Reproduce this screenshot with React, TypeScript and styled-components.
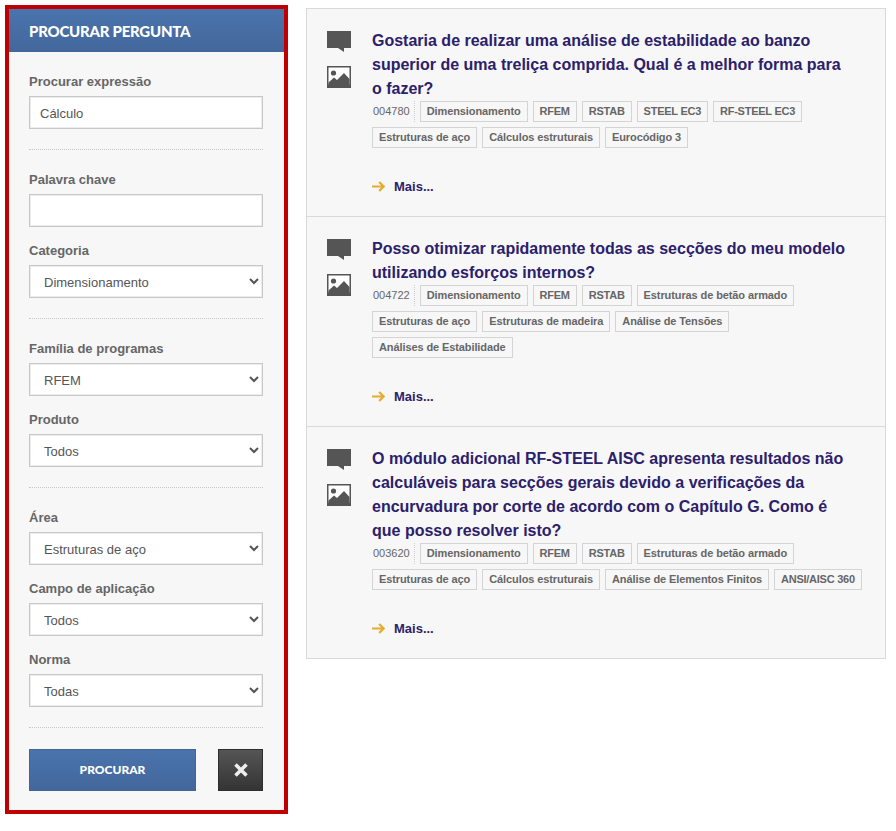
import React from "react";
import styled, { createGlobalStyle } from "styled-components";

const Global = createGlobalStyle`
  html, body { margin: 0; padding: 0; background: #fff; }
  body { font-family: "Liberation Sans", Arial, sans-serif; }
  * { box-sizing: border-box; }
`;

const Page = styled.div`
  width: 896px;
  height: 831px;
  display: flex;
  align-items: flex-start;
  padding: 5px 0 0 5px;
  gap: 18px;
`;

const Sidebar = styled.form`
  width: 283px;
  height: 809px;
  flex: none;
  border: 4px solid #c00000;
  background: #f7f7f7;
`;

const SideHeader = styled.h2`
  margin: 0;
  height: 43px;
  padding: 0 20px;
  display: flex;
  align-items: center;
  background: linear-gradient(#4a74ad, #43679b);
  color: #fff;
  font-family: Lato, "Liberation Sans", sans-serif;
  font-size: 15px;
  font-weight: 900;
  letter-spacing: -0.25px;
`;

const SideBody = styled.div`
  padding: 21px 21px 0 20px;
  display: flex;
  flex-direction: column;
`;

const Group = styled.div`
  display: flex;
  flex-direction: column;
  gap: 15px;
`;

const Field = styled.div`
  display: flex;
  flex-direction: column;
  gap: 6px;
`;

const Label = styled.label`
  height: 17px;
  font-size: 13px;
  line-height: 17px;
  font-weight: 700;
  color: #666;
`;

const TextInput = styled.input`
  width: 234px;
  height: 33px;
  border: 1px solid #c8c8c8;
  box-shadow: inset 0 0 0 1px #ececec;
  background: #fff;
  padding: 1px 10px 0;
  font-family: "Liberation Sans", Arial, sans-serif;
  font-size: 13px;
  color: #555;
  outline: none;
`;

const Select = styled.select`
  width: 234px;
  height: 33px;
  border: 1px solid #c8c8c8;
  box-shadow: inset 0 0 0 1px #ececec;
  background-color: #fff;
  padding: 1px 10px 0;
  font-family: "Liberation Sans", Arial, sans-serif;
  font-size: 13px;
  color: #555;
  outline: none;
`;

const Dotted = styled.hr`
  width: 234px;
  margin: 20px 0 21px;
  height: 1px;
  border: 0;
  border-top: 1px dotted #c8c8c8;
`;

const Buttons = styled.div`
  display: flex;
  justify-content: space-between;
`;

const SearchButton = styled.button`
  width: 167px;
  height: 42px;
  padding: 0 0 2px;
  border: 1px solid #41659a;
  background: linear-gradient(#4a74ad, #43679b);
  color: #fff;
  font-family: Lato, "Liberation Sans", sans-serif;
  font-size: 12px;
  font-weight: 900;
`;

const ClearButton = styled.button`
  width: 45px;
  height: 42px;
  padding: 0;
  border: 1px solid #2e2e2e;
  background: linear-gradient(#555, #343434);
  display: flex;
  align-items: center;
  justify-content: center;
`;

const Results = styled.div`
  width: 580px;
  margin-top: 3px;
  border: 1px solid #d9d9d9;
  background: #f7f7f7;
  flex: none;
`;

const Row = styled.article<{ $h: number }>`
  height: ${(p) => p.$h}px;
  padding: 20px 20px 0 20px;
  display: flex;
  gap: 21px;
  border-bottom: 1px solid #d9d9d9;
  &:last-child { border-bottom: 0; }
`;

const IconColumn = styled.div`
  width: 24px;
  flex: none;
  display: flex;
  flex-direction: column;
  gap: 14px;
  padding-top: 2px;
`;

const Content = styled.div`
  flex: 1;
  min-width: 0;
`;

const Title = styled.h3`
  margin: 0;
  max-width: 480px;
  font-size: 16px;
  line-height: 24px;
  font-weight: 700;
  color: #2c206b;
`;

const TagLine = styled.div`
  display: flex;
  flex-wrap: wrap;
  align-items: center;
  gap: 5px;
`;

const Ref = styled.span`
  height: 21px;
  line-height: 21px;
  padding: 0 4px 0 1px;
  border-right: 1px dotted #ccc;
  font-size: 11px;
  font-weight: 400;
  color: #666;
`;

const Tag = styled.span<{ $caps: boolean }>`
  height: 21px;
  line-height: 19px;
  padding: 0 6px;
  border: 1px solid #d4d4d4;
  font-size: 11px;
  font-weight: 700;
  letter-spacing: ${(p) => (p.$caps ? "-0.25px" : "-0.1px")};
  color: #666;
  white-space: nowrap;
`;

const More = styled.a`
  margin-top: 30px;
  display: flex;
  align-items: center;
  gap: 9px;
  font-size: 13px;
  line-height: 17px;
  font-weight: 700;
  color: #2c206b;
`;

const Arrow = () => (
  <svg width="13" height="11" viewBox="0 0 13 11" fill="none" stroke="#e5ac2e" strokeWidth="2.2">
    <path d="M0 5.5h11.5M7.2 1l4.5 4.5-4.5 4.5" />
  </svg>
);

const BubbleIcon = () => (
  <svg width="24" height="21" viewBox="0 0 24 21" fill="#555">
    <path d="M0 0h24v17h-7v4l-6-4H0z" />
  </svg>
);

const ImageIcon = () => (
  <svg width="24" height="22" viewBox="0 0 24 22">
    <rect width="24" height="22" fill="#555" />
    <rect x="1.5" y="1.5" width="21" height="17" fill="#fff" />
    <circle cx="6.5" cy="7" r="2.6" fill="#555" />
    <path d="M1.5 16.5L7 11.5l3 2.5 7-7 5.5 6V19h-21z" fill="#555" />
  </svg>
);

const CloseIcon = () => (
  <svg width="14" height="14" viewBox="0 0 14 14" stroke="#eee" strokeWidth="3.6" fill="none">
    <path d="M1.5 1.5l11 11M12.5 1.5l-11 11" />
  </svg>
);

const SelectField = ({ label, value }: { label: string; value: string }) => (
  <Field>
    <Label>{label}</Label>
    <Select defaultValue={value}>
      <option>{value}</option>
    </Select>
  </Field>
);

type Item = { h: number; title: string; ref: string; tags: string[] };

const items: Item[] = [
  {
    h: 208,
    title: "Gostaria de realizar uma análise de estabilidade ao banzo superior de uma treliça comprida. Qual é a melhor forma para o fazer?",
    ref: "004780",
    tags: ["Dimensionamento", "RFEM", "RSTAB", "STEEL EC3", "RF-STEEL EC3", "Estruturas de aço", "Cálculos estruturais", "Eurocódigo 3"],
  },
  {
    h: 210,
    title: "Posso otimizar rapidamente todas as secções do meu modelo utilizando esforços internos?",
    ref: "004722",
    tags: ["Dimensionamento", "RFEM", "RSTAB", "Estruturas de betão armado", "Estruturas de aço", "Estruturas de madeira", "Análise de Tensões", "Análises de Estabilidade"],
  },
  {
    h: 231,
    title: "O módulo adicional RF-STEEL AISC apresenta resultados não calculáveis para secções gerais devido a verificações da encurvadura por corte de acordo com o Capítulo G. Como é que posso resolver isto?",
    ref: "003620",
    tags: ["Dimensionamento", "RFEM", "RSTAB", "Estruturas de betão armado", "Estruturas de aço", "Cálculos estruturais", "Análise de Elementos Finitos", "ANSI/AISC 360"],
  },
];

export default function App() {
  return (
    <>
      <Global />
      <Page>
        <Sidebar onSubmit={(e) => e.preventDefault()}>
          <SideHeader>PROCURAR PERGUNTA</SideHeader>
          <SideBody>
            <Field>
              <Label>Procurar expressão</Label>
              <TextInput defaultValue="Cálculo" />
            </Field>
            <Dotted />
            <Group>
              <Field>
                <Label>Palavra chave</Label>
                <TextInput />
              </Field>
              <SelectField label="Categoria" value="Dimensionamento" />
            </Group>
            <Dotted />
            <Group>
              <SelectField label="Família de programas" value="RFEM" />
              <SelectField label="Produto" value="Todos" />
            </Group>
            <Dotted />
            <Group>
              <SelectField label="Área" value="Estruturas de aço" />
              <SelectField label="Campo de aplicação" value="Todos" />
              <SelectField label="Norma" value="Todas" />
            </Group>
            <Dotted />
            <Buttons>
              <SearchButton type="submit">PROCURAR</SearchButton>
              <ClearButton type="button" aria-label="Limpar">
                <CloseIcon />
              </ClearButton>
            </Buttons>
          </SideBody>
        </Sidebar>
        <Results>
          {items.map((it) => (
            <Row key={it.ref} $h={it.h}>
              <IconColumn>
                <BubbleIcon />
                <ImageIcon />
              </IconColumn>
              <Content>
                <Title>{it.title}</Title>
                <TagLine>
                  <Ref>{it.ref}</Ref>
                  {it.tags.map((t) => (
                    <Tag key={t} $caps={t === t.toUpperCase()}>{t}</Tag>
                  ))}
                </TagLine>
                <More>
                  <Arrow />
                  Mais...
                </More>
              </Content>
            </Row>
          ))}
        </Results>
      </Page>
    </>
  );
}
